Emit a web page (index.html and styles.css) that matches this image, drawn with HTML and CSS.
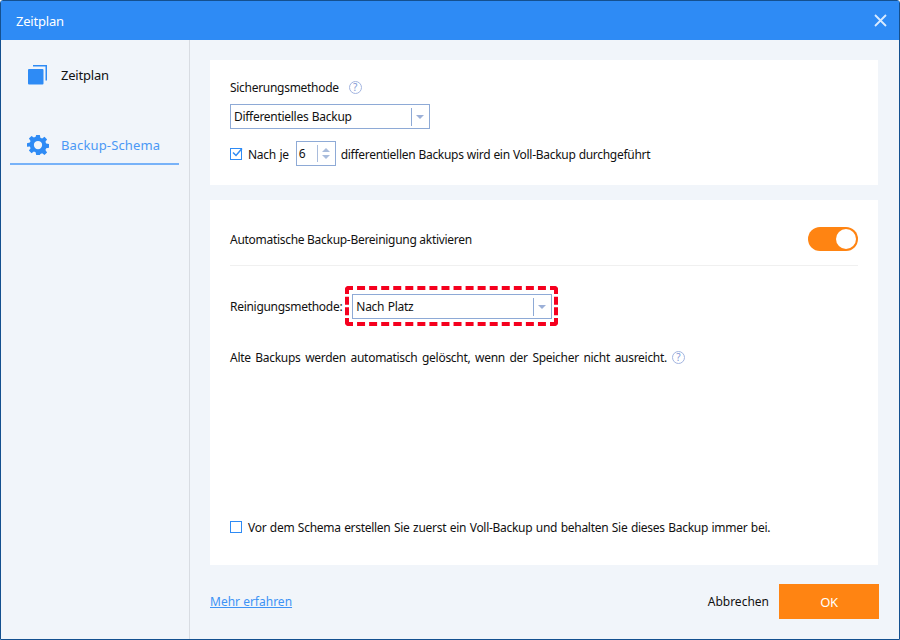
FILE: index.html
```html
<!DOCTYPE html>
<html lang="de">
<head>
<meta charset="utf-8">
<title>Zeitplan</title>
<link rel="stylesheet" href="styles.css">
</head>
<body>
<div class="window">
  <header class="titlebar">
    <span class="title">Zeitplan</span>
    <svg class="close" width="13" height="13" viewBox="0 0 13 13"><path d="M1 1l11 11M12 1L1 12" stroke="#d9ebff" stroke-width="1.8" fill="none"/></svg>
  </header>
  <div class="content">
    <aside class="sidebar">
      <div class="nav-item">
        <svg class="nav-icon" width="20" height="20" viewBox="0 0 20 20"><path d="M5 0h14v15.500h-1.500V1.500H5z" fill="#2e8bf5"/><rect x="0" y="4" width="15.500" height="15.500" rx="1" fill="#2e8bf5"/></svg>
        <span class="nav-plain">Zeitplan</span>
      </div>
      <div class="nav-item active">
        <svg class="nav-icon" width="22" height="22" viewBox="0 0 24 24"><path fill="#2e8bf5" fill-rule="evenodd" d="M10 1h4l.6 3.100 1.900.8 2.600-1.800 2.800 2.800-1.800 2.600.8 1.900 3.100.6v4l-3.100.6-.8 1.900 1.800 2.600-2.800 2.800-2.600-1.800-1.900.8L14 23h-4l-.6-3.100-1.900-.8-2.600 1.800-2.800-2.800 1.800-2.600-.8-1.900L0 14v-4l3.100-.6.8-1.900L2.100 4.900l2.800-2.800 2.600 1.800 1.900-.8zM12 7.500a4.500 4.500 0 1 0 0 9 4.500 4.500 0 0 0 0-9z"/></svg>
        <span>Backup-Schema</span>
      </div>
    </aside>
    <main class="main">
      <section class="card card-method">
        <div class="row label-row">
          <span>Sicherungsmethode</span>
          <span class="help">?</span>
        </div>
        <div class="select select-method">
          <span class="select-text">Differentielles Backup</span>
          <span class="select-arrow"></span>
        </div>
        <div class="row check-row">
          <span class="checkbox checked">
            <svg width="13" height="13" viewBox="0 0 13 13"><path d="M3 5.500l3 3 6-7" stroke="#2e8bf5" stroke-width="1.500" fill="none"/></svg>
          </span>
          <span class="low-text">Nach je</span>
          <span class="spinner">
            <span class="spinner-value">6</span>
            <span class="spinner-arrows"><i class="up"></i><i class="down"></i></span>
          </span>
          <span class="low-text diff-text">differentiellen Backups wird ein Voll-Backup durchgeführt</span>
        </div>
      </section>
      <section class="card card-clean">
        <div class="toggle-row">
          <span class="low-text auto-text">Automatische Backup-Bereinigung aktivieren</span>
          <span class="toggle"><span class="knob"></span></span>
        </div>
        <div class="row clean-row">
          <span>Reinigungsmethode:</span>
          <span class="highlight">
            <span class="select select-clean">
              <span class="select-text">Nach Platz</span>
              <span class="select-arrow"></span>
            </span>
          </span>
        </div>
        <div class="row note-row">
          <span class="note-text">Alte Backups werden automatisch gelöscht, wenn der Speicher nicht ausreicht.</span>
          <span class="help">?</span>
        </div>
        <div class="row keep-row">
          <span class="checkbox"></span>
          <span>Vor dem Schema erstellen Sie zuerst ein Voll-Backup und behalten Sie dieses Backup immer bei.</span>
        </div>
      </section>
      <footer class="footer">
        <a class="more" href="#">Mehr erfahren</a>
        <div class="actions">
          <span class="cancel">Abbrechen</span>
          <span class="ok">OK</span>
        </div>
      </footer>
    </main>
  </div>
</div>
</body>
</html>
```
FILE: styles.css
```css
* { box-sizing: border-box; }
html, body { margin: 0; padding: 0; }
body {
  width: 900px;
  height: 640px;
  overflow: hidden;
  background: #fff;
  font-family: "Noto Sans", "Liberation Sans", sans-serif;
  font-size: 12px;
  color: #111;
  letter-spacing: -0.29px;
  word-spacing: 0.7px;
}
.window {
  width: 900px;
  height: 640px;
  display: flex;
  flex-direction: column;
  border: 1px solid #14508f;
  border-radius: 3px 3px 0 0;
  background: #f1f5fa;
}
.titlebar {
  height: 39px;
  flex: none;
  background: #2e8bf5;
  color: #fff;
  font-size: 13px;
  letter-spacing: -0.2px;
  display: flex;
  align-items: center;
  justify-content: space-between;
  padding: 0 12px 0 15px;
}
.content { flex: 1; display: flex; min-height: 0; }
.sidebar {
  width: 189px;
  flex: none;
  border-right: 1px solid #d8dce2;
  padding: 19px 10px 0 9px;
  font-size: 13px;
}
.nav-item {
  height: 32px;
  display: flex;
  align-items: center;
  gap: 13px;
  padding-left: 18px;
  margin-bottom: 38px;
}
.nav-plain { letter-spacing: -0.2px; }
.nav-item.active {
  color: #4a98f5;
  height: 36px;
  letter-spacing: 0.15px;
  border-bottom: 2px solid #78b2f8;
  padding-bottom: 3px;
  padding-left: 17px;
}
.nav-item.active .nav-icon { margin-right: -1px; }
.main {
  flex: 1;
  display: flex;
  flex-direction: column;
  padding: 20px 20px 0 20px;
}
.card { background: #fff; padding: 0 20px; width: 668px; }
.card-method { height: 125px; padding-top: 19px; }
.card-clean { height: 365px; margin-top: 15px; display: flex; flex-direction: column; }
.row { display: flex; align-items: center; }
.label-row { height: 16px; gap: 10px; }
.help {
  width: 13px;
  height: 13px;
  border: 1px solid #a3b5e0;
  border-radius: 50%;
  color: #8198d4;
  font-size: 10px;
  line-height: 11px;
  text-align: center;
  letter-spacing: 0;
}
.select {
  display: flex;
  align-items: center;
  justify-content: space-between;
  height: 25px;
  border: 1px solid #8eaad6;
  background: #fff;
  padding-left: 3px;
}
.select-method { width: 200px; margin-top: 9px; }
.select-clean { width: 200px; }
.select-arrow {
  width: 18px;
  height: 18px;
  border-left: 1px solid #8eaad6;
  position: relative;
  flex: none;
}
.select-arrow::after {
  content: "";
  position: absolute;
  left: 4px;
  top: 7px;
  border: 4px solid transparent;
  border-top: 4px solid #9cb0d8;
  border-bottom: 0;
}
.check-row { margin-top: 12px; height: 25px; }
.low-text { padding-top: 1px; }
.checkbox {
  width: 12px;
  height: 12px;
  border: 1px solid #2e8bf5;
  flex: none;
  margin-right: 6px;
  position: relative;
}
.checkbox svg { position: absolute; left: -1px; top: -2px; }
.spinner {
  width: 40px;
  height: 25px;
  border: 1px solid #8eaad6;
  margin: 0 5px 0 7px;
  display: flex;
  align-items: center;
  justify-content: space-between;
  padding-left: 2px;
}
.spinner-arrows {
  width: 18px;
  height: 17px;
  border-left: 1px solid #a9bcdc;
  display: flex;
  flex-direction: column;
  align-items: center;
  justify-content: center;
  gap: 3px;
}
.spinner-arrows i { display: block; border: 4px solid transparent; }
.spinner-arrows .up { border-top: 0; border-bottom: 4px solid #a9bcdc; }
.spinner-arrows .down { border-bottom: 0; border-top: 4px solid #a9bcdc; }
.diff-text { word-spacing: 0.3px; }
.toggle-row {
  height: 66px;
  flex: none;
  border-bottom: 1px solid #f0f0f0;
  display: flex;
  align-items: center;
  justify-content: space-between;
  padding-top: 12px;
}
.auto-text { word-spacing: 0; }
.toggle {
  width: 50px;
  height: 24px;
  border-radius: 12px;
  background: #ff8412;
  display: flex;
  align-items: center;
  justify-content: flex-end;
  padding-right: 2px;
}
.knob { width: 20px; height: 20px; border-radius: 50%; background: #fff; }
.clean-row { margin-top: 20px; }
.highlight {
  border: 4px dashed #f5001e;
  border-radius: 4px;
  padding: 4px 2px 3px 3px;
  margin-left: 3px;
  display: block;
}
.note-row { margin-top: 23px; gap: 5px; }
.note-text { word-spacing: 1.8px; }
.keep-row { margin-top: auto; margin-bottom: 30px; height: 16px; }
.footer {
  height: 35px;
  margin-top: 19px;
  display: flex;
  align-items: center;
  justify-content: space-between;
  width: 669px;
}
.more { color: #3e93f5; text-decoration: underline; font-size: 12px; letter-spacing: 0; word-spacing: 0; }
.actions { display: flex; align-items: center; gap: 10px; }
.cancel { font-size: 12px; letter-spacing: 0; }
.ok {
  width: 100px;
  height: 35px;
  background: #ff8412;
  color: #fff;
  font-size: 13px;
  display: flex;
  align-items: center;
  justify-content: center;
}
```
